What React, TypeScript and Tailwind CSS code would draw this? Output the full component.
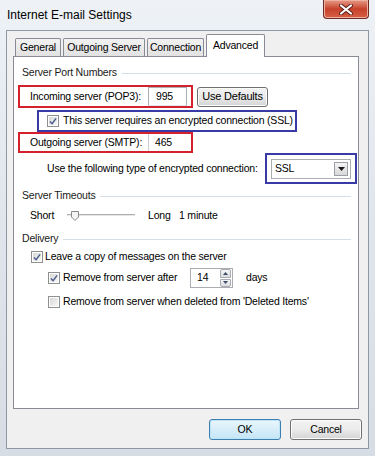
import React from "react";

const font = "font-['Liberation_Sans',Arial,sans-serif]";

function Check({ checked }: { checked: boolean }) {
  return (
    <span className="flex h-[12px] w-[12px] shrink-0 items-center justify-center border border-[#8e8f8f] bg-white p-px">
      <span className="flex h-full w-full items-center justify-center bg-gradient-to-br from-[#d8d8d8] to-[#f7f7f7]">
        {checked && (
          <svg width="9" height="9" viewBox="0 0 9 9">
            <path d="M1 4.5 L3.5 7 L8 1" fill="none" stroke="#4b5e8e" strokeWidth="1.7" />
          </svg>
        )}
      </span>
    </span>
  );
}

function Section({ title }: { title: string }) {
  return (
    <div className="flex h-[16px] items-center pl-[8px] pr-[7px]">
      <span className="text-[#1a1a1a]">{title}</span>
      <span className="ml-[5px] h-px flex-1 bg-[#d5dfe5]" />
    </div>
  );
}

function WinButton({ label, primary }: { label: string; primary?: boolean }) {
  return (
    <button
      type="button"
      className={
        primary
          ? "flex h-[21px] w-[72px] items-center justify-center rounded-[3px] border border-[#3c7fb1] bg-gradient-to-b from-[#eaf6fd] to-[#c4e5f6] text-black shadow-[inset_0_0_0_1px_#bfe3f7]"
          : "flex h-[21px] w-[72px] items-center justify-center rounded-[3px] border border-[#707070] bg-gradient-to-b from-[#f2f2f2] via-[#ebebeb] to-[#d4d4d4] text-black shadow-[inset_0_0_0_1px_#fcfcfc]"
      }
    >
      {label}
    </button>
  );
}

export default function App() {
  return (
    <div
      className={`${font} flex h-[456px] w-[375px] flex-col overflow-hidden whitespace-nowrap bg-gradient-to-b from-[#eef2f6] via-[#dfe5ec] to-[#d6dde5] text-[10.5px] tracking-[-0.2px] text-black`}
    >
      {/* title bar */}
      <div className="flex h-[30px] shrink-0 items-start justify-between">
        <span className="pl-[7px] pt-[7px] text-[12px] leading-[16px] tracking-normal text-black">
          Internet E-mail Settings
        </span>
        <div className="mr-[6px] flex h-[19px] w-[46px] items-center justify-center rounded-b-[4px] border border-t-0 border-[#6e2a22] bg-gradient-to-b from-[#e59a88] via-[#c7412b] to-[#d65f45] shadow-[inset_0_0_0_1px_#eeb0a0]">
          <svg width="14" height="11" viewBox="0 0 14 11">
            <path
              d="M2 1.5 L12 9.5 M12 1.5 L2 9.5"
              stroke="#5a1f18"
              strokeWidth="4"
              strokeLinecap="round"
            />
            <path
              d="M2 1.5 L12 9.5 M12 1.5 L2 9.5"
              stroke="#ffffff"
              strokeWidth="2.2"
              strokeLinecap="round"
            />
          </svg>
        </div>
      </div>

      {/* client area */}
      <div className="mx-[6px] flex h-[419px] shrink-0 flex-col border border-[#8e98a4] bg-[#f0f0f0]">
        {/* tabs */}
        <div className="flex h-[26px] items-end gap-[2px] pl-[8px]">
          {["General", "Outgoing Server", "Connection"].map((t, i) => (
            <div
              key={t}
              className={`flex h-[19px] items-center justify-center rounded-t-[2px] border border-b-0 border-[#898c95] bg-gradient-to-b from-[#f2f2f2] to-[#e1e1e1] pb-px ${
                i === 0 ? "w-[46px]" : i === 1 ? "w-[82px]" : "w-[57px]"
              }`}
            >
              {t}
            </div>
          ))}
          <div className="relative z-10 flex h-[23px] w-[59px] items-start justify-center rounded-t-[2px] border border-b-0 border-[#898c95] bg-white pt-[3px]">
            Advanced
          </div>
        </div>

        {/* tab panel */}
        <div className="-mt-px ml-[6px] flex h-[353px] w-[346px] flex-col border border-[#898c95] bg-white pt-[8px]">
          <Section title="Server Port Numbers" />

          <div className="mt-[4px] flex items-center">
            <div className="ml-[4px] flex h-[23px] w-[175px] items-center border-2 border-[#d3222b] pl-[10px]">
              <span className="w-[118px]">Incoming server (POP3):</span>
              <span className="flex h-[19px] w-[39px] items-center border border-[#abadb3] border-b-[#e3e9ef] pl-[7px]">
                995
              </span>
            </div>
            <button
              type="button"
              className="ml-[4px] flex h-[20px] w-[71px] items-center justify-center rounded-[3px] border border-[#707070] bg-gradient-to-b from-[#f2f2f2] via-[#ebebeb] to-[#d4d4d4] text-[11px] shadow-[inset_0_0_0_1px_#fcfcfc]"
            >
              Use Defaults
            </button>
          </div>

          <div className="ml-[23px] mt-[2px] flex h-[22px] w-[260px] items-center border-2 border-[#3a3aa6] pl-[8px]">
            <Check checked />
            <span className="ml-[4px]">This server requires an encrypted connection (SSL)</span>
          </div>

          <div className="ml-[4px] flex h-[21px] w-[175px] items-center border-2 border-[#d3222b] pl-[10px]">
            <span className="w-[118px]">Outgoing server (SMTP):</span>
            <span className="flex h-[17px] w-[40px] items-center border-l border-[#c9ccd2] pl-[6px]">
              465
            </span>
          </div>

          <div className="flex items-center">
            <span className="ml-[33px]">Use the following type of encrypted connection:</span>
            <div className="ml-auto mr-px flex h-[31px] w-[92px] items-center border-2 border-[#3a3aa6] pl-[4px]">
              <div className="flex h-[20px] w-[80px] items-center justify-between border border-[#abadb3] bg-white pl-[3px] pr-[2px]">
                <span>SSL</span>
                <span className="flex h-[14px] w-[14px] items-center justify-center border border-[#9ba0a8] bg-gradient-to-b from-[#f4f4f4] to-[#d8d8d8]">
                  <svg width="7" height="4" viewBox="0 0 7 4">
                    <path d="M0 0 L7 0 L3.5 4 Z" fill="#1a1a1a" />
                  </svg>
                </span>
              </div>
            </div>
          </div>

          <div className="mt-[4px]">
            <Section title="Server Timeouts" />
          </div>

          <div className="mt-[2px] flex h-[20px] items-center">
            <span className="ml-[16px] w-[37px]">Short</span>
            <div className="relative h-[10px] w-[68px]">
              <span className="absolute left-0 right-0 top-[3px] h-[2px] border-t border-[#b0b0b0] bg-[#e6e6e6]" />
              <svg className="absolute left-[4px] top-0" width="8" height="10" viewBox="0 0 8 10">
                <path d="M0.5 0.5 H7.5 V6 L4 9.5 L0.5 6 Z" fill="#f4f4f4" stroke="#8a8a8a" />
              </svg>
            </div>
            <span className="ml-[13px] w-[31px]">Long</span>
            <span>1 minute</span>
          </div>

          <div className="mt-[5px]">
            <Section title="Delivery" />
          </div>

          <div className="mt-[1px] flex h-[18px] items-center pl-[17px]">
            <Check checked />
            <span className="ml-[2px]">Leave a copy of messages on the server</span>
          </div>

          <div className="mt-[2px] flex h-[20px] items-center pl-[34px]">
            <Check checked />
            <span className="ml-[3px] w-[127px]">Remove from server after</span>
            <div className="flex h-[20px] w-[43px] items-center border border-[#abadb3] bg-white">
              <span className="flex-1 pl-[6px]">14</span>
              <div className="mr-px flex h-[18px] w-[11px] flex-col gap-px">
                <span className="flex flex-1 items-center justify-center rounded-t-[2px] border border-[#a8acb4] bg-gradient-to-b from-[#f5f5f5] to-[#dcdcdc]">
                  <svg width="5" height="3" viewBox="0 0 5 3">
                    <path d="M0 3 L5 3 L2.5 0 Z" fill="#3c4a6a" />
                  </svg>
                </span>
                <span className="flex flex-1 items-center justify-center rounded-b-[2px] border border-[#a8acb4] bg-gradient-to-b from-[#f5f5f5] to-[#dcdcdc]">
                  <svg width="5" height="3" viewBox="0 0 5 3">
                    <path d="M0 0 L5 0 L2.5 3 Z" fill="#3c4a6a" />
                  </svg>
                </span>
              </div>
            </div>
            <span className="ml-[13px]">days</span>
          </div>

          <div className="mt-[5px] flex h-[18px] items-center pl-[34px]">
            <Check checked={false} />
            <span className="ml-[3px]">Remove from server when deleted from 'Deleted Items'</span>
          </div>
        </div>

        {/* buttons */}
        <div className="mt-[10px] flex justify-end gap-[9px] pr-[6px]">
          <WinButton label="OK" primary />
          <WinButton label="Cancel" />
        </div>
      </div>
    </div>
  );
}
